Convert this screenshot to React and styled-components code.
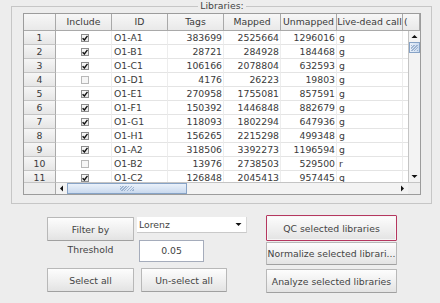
import React from "react";
import styled, { createGlobalStyle } from "styled-components";

const GlobalStyle = createGlobalStyle`
  html, body {
    margin: 0;
    padding: 0;
    background: #ededed;
  }
  body {
    width: 440px;
    height: 303px;
    overflow: hidden;
    font-family: "DejaVu Sans", "Noto Sans", sans-serif;
    color: #444;
  }
`;

const COLS = [56, 56, 56, 57, 56, 66];
const HEADERS = ["Include", "ID", "Tags", "Mapped", "Unmapped", "Live-dead call"];

const ROWS = [
  [true, "O1-A1", 383699, 2525664, 1296016, "g"],
  [true, "O1-B1", 28721, 284928, 184468, "g"],
  [true, "O1-C1", 106166, 2078804, 632593, "g"],
  [false, "O1-D1", 4176, 26223, 19803, "g"],
  [true, "O1-E1", 270958, 1755081, 857591, "g"],
  [true, "O1-F1", 150392, 1446848, 882679, "g"],
  [true, "O1-G1", 118093, 1802294, 647936, "g"],
  [true, "O1-H1", 156265, 2215298, 499348, "g"],
  [true, "O1-A2", 318506, 3392273, 1196594, "g"],
  [false, "O1-B2", 13976, 2738503, 529500, "r"],
  [true, "O1-C2", 126848, 2045413, 957445, "g"],
];

const Page = styled.div`
  width: 440px;
`;

const GroupBox = styled.fieldset`
  box-sizing: border-box;
  width: 421px;
  margin: 0 0 0 11px;
  padding: 1px 10px 8px 11px;
  border: 1px solid #c6c6c6;
  min-inline-size: 0;
`;

const GroupTitle = styled.legend`
  margin: 0 auto;
  padding: 0 2px;
  font-size: 9.3px;
  line-height: 12px;
  color: #444;
`;

const TableFrame = styled.div`
  display: grid;
  grid-template-columns: 32px 352px 12px;
  grid-template-rows: 17px 151px 12px;
  border: 1px solid #9c9c9c;
  background: #ffffff;
  font-size: 9.3px;
  color: #3a3a3a;
`;

const Corner = styled.div`
  background: linear-gradient(#f7f7f7, #e9e9e9);
  border-right: 1px solid #a9a9a9;
  border-bottom: 1px solid #a9a9a9;
`;

const HeaderStrip = styled.div`
  grid-column: 2 / 4;
  display: flex;
  overflow: hidden;
  background: linear-gradient(#f7f7f7, #e9e9e9);
  border-bottom: 1px solid #a9a9a9;
`;

const HeaderCell = styled.div`
  box-sizing: border-box;
  flex: ${(p) => (p.$w ? `0 0 ${p.$w}px` : "1 1 auto")};
  border-right: 1px solid #a9a9a9;
  line-height: 16px;
  text-align: ${(p) => (p.$w ? "center" : "left")};
  padding-left: ${(p) => (p.$w ? 0 : 1)}px;
  white-space: nowrap;
  overflow: hidden;
`;

const RowHeads = styled.div`
  overflow: hidden;
  background: #ececec;
`;

const RowHead = styled.div`
  box-sizing: border-box;
  height: 14px;
  line-height: 13px;
  text-align: center;
  border-right: 1px solid #a9a9a9;
  border-bottom: 1px solid #c4c4c4;
  background: linear-gradient(#f6f6f6, #e6e6e6);
`;

const Viewport = styled.div`
  overflow: hidden;
`;

const Row = styled.div`
  display: grid;
  grid-template-columns: ${COLS.map((c) => `${c}px`).join(" ")} 60px;
  height: 14px;
  width: 407px;
`;

const Cell = styled.div`
  box-sizing: border-box;
  border-right: 1px solid #ededed;
  border-bottom: 1px solid #e4e4e4;
  line-height: 13px;
  white-space: nowrap;
  overflow: hidden;
  text-align: ${(p) => p.$align || "left"};
  padding: 0 ${(p) => (p.$align === "right" ? 1 : 0)}px 0
    ${(p) => (p.$align === "left" || !p.$align ? 2 : 0)}px;
  display: ${(p) => (p.$check ? "flex" : "block")};
  align-items: center;
  justify-content: center;
`;

const Box = styled.span`
  box-sizing: border-box;
  width: 8px;
  height: 8px;
  border: 1px solid ${(p) => (p.$on ? "#8c8c8c" : "#b8b8b8")};
  background: ${(p) => (p.$on ? "linear-gradient(#fafafa, #e6e6e6)" : "#f6f6f6")};
  display: flex;
  align-items: center;
  justify-content: center;
`;

const VScroll = styled.div`
  display: flex;
  flex-direction: column;
  background: #f3f3f3;
  border-left: 1px solid #c4c4c4;
`;

const HScroll = styled.div`
  grid-column: 2 / 3;
  display: flex;
  background: #f3f3f3;
  border-top: 1px solid #c4c4c4;
`;

const BlankCell = styled.div`
  background: #ededed;
  border-top: 1px solid #c4c4c4;
  border-right: ${(p) => (p.$right ? "1px solid #a9a9a9" : "none")};
`;

const Arrow = styled.div`
  flex: 0 0 11px;
  display: flex;
  align-items: center;
  justify-content: center;
`;

const Thumb = styled.div`
  box-sizing: border-box;
  flex: 0 0 ${(p) => p.$len}px;
  border: 1px solid #87a3c6;
  background: linear-gradient(
    ${(p) => (p.$vertical ? "90deg" : "180deg")},
    #eaf1fa,
    #c9d9ee
  );
  display: flex;
  align-items: center;
  justify-content: center;
`;

const Grip = styled.span`
  width: ${(p) => (p.$vertical ? 7 : 14)}px;
  height: ${(p) => (p.$vertical ? 6 : 5)}px;
  background: repeating-linear-gradient(
    135deg,
    #8fa8c8 0 1px,
    transparent 1px 2px
  );
  opacity: 0.8;
`;

const Trough = styled.div`
  flex: 1 1 auto;
`;

const Controls = styled.div`
  display: flex;
  align-items: flex-start;
  padding-left: 47px;
  gap: 19px;
`;

const LeftGrid = styled.div`
  display: grid;
  grid-template-columns: 87px 110px;
  grid-template-rows: 24px 27px 24px;
  column-gap: 3px;
  margin-top: 13px;
`;

const Button = styled.button`
  box-sizing: border-box;
  margin: ${(p) => p.$m || "0"};
  width: ${(p) => p.$w || 87}px;
  height: ${(p) => p.$h || 24}px;
  padding: 0;
  font-family: "DejaVu Sans", sans-serif;
  font-size: 9.3px;
  color: #444;
  white-space: nowrap;
  overflow: hidden;
  border: 1px solid ${(p) => (p.$focus ? "#b5375f" : "#b8b8b8")};
  border-bottom-color: ${(p) => (p.$focus ? "#b5375f" : "#a0a0a0")};
  border-radius: 1px;
  background: linear-gradient(#fdfdfd, #eeeeee 60%, #e3e3e3);
  box-shadow: ${(p) => (p.$focus ? "inset 0 0 0 1px #f6f6f6" : "none")};
`;

const Combo = styled.div`
  box-sizing: border-box;
  width: 110px;
  height: 16px;
  display: flex;
  align-items: center;
  justify-content: space-between;
  padding: 0 4px 0 2px;
  background: #fff;
  border-bottom: 1px solid #c9c9c9;
  border-right: 1px solid #d8d8d8;
  font-size: 9.3px;
`;

const Label = styled.div`
  font-size: 9.3px;
  line-height: 17px;
  text-align: center;
`;

const Field = styled.div`
  box-sizing: border-box;
  width: 65px;
  height: 22px;
  margin: -1px 0 0 2px;
  background: #fff;
  border: 1px solid #a5acbb;
  font-size: 9.3px;
  line-height: 20px;
  text-align: center;
`;

const RightCol = styled.div`
  display: flex;
  flex-direction: column;
  margin-top: 11px;
`;

function Tri({ dir }) {
  const pts = {
    up: "0,4 3,1 6,4",
    down: "0,1 6,1 3,4",
    left: "4,0 4,6 1,3",
    right: "1,0 1,6 4,3",
  }[dir];
  const vert = dir === "up" || dir === "down";
  return (
    <svg width={vert ? 7 : 5} height={vert ? 5 : 7} viewBox={vert ? "0 0 6 5" : "0 0 5 6"}>
      <polygon points={pts} fill="#111" />
    </svg>
  );
}

function Check({ on }) {
  return (
    <Box $on={on}>
      {on && (
        <svg width="6" height="6" viewBox="0 0 6 6">
          <path d="M0.6 3.2 L2.4 5 L5.5 0.8" stroke="#111" strokeWidth="1.4" fill="none" />
        </svg>
      )}
    </Box>
  );
}

export default function App() {
  return (
    <Page>
      <GlobalStyle />
      <GroupBox>
        <GroupTitle>Libraries:</GroupTitle>
        <TableFrame>
          <Corner />
          <HeaderStrip>
            {HEADERS.map((h, i) => (
              <HeaderCell key={h} $w={COLS[i]}>
                {h}
              </HeaderCell>
            ))}
            <HeaderCell>(</HeaderCell>
          </HeaderStrip>

          <RowHeads>
            {ROWS.map((_, i) => (
              <RowHead key={i}>{i + 1}</RowHead>
            ))}
          </RowHeads>
          <Viewport>
            {ROWS.map((r) => (
              <Row key={r[1]}>
                <Cell $check>
                  <Check on={r[0]} />
                </Cell>
                <Cell>{r[1]}</Cell>
                <Cell $align="right">{r[2]}</Cell>
                <Cell $align="right">{r[3]}</Cell>
                <Cell $align="right">{r[4]}</Cell>
                <Cell>{r[5]}</Cell>
                <Cell />
              </Row>
            ))}
          </Viewport>
          <VScroll>
            <Arrow>
              <Tri dir="up" />
            </Arrow>
            <Thumb $len={11} $vertical>
              <Grip $vertical />
            </Thumb>
            <Trough />
            <Arrow>
              <Tri dir="down" />
            </Arrow>
          </VScroll>

          <BlankCell $right />
          <HScroll>
            <Arrow>
              <Tri dir="left" />
            </Arrow>
            <Thumb $len={120}>
              <Grip />
            </Thumb>
            <Trough />
            <Arrow>
              <Tri dir="right" />
            </Arrow>
          </HScroll>
          <BlankCell />
        </TableFrame>
      </GroupBox>

      <Controls>
        <LeftGrid>
          <Button>Filter by</Button>
          <Combo>
            <span>Lorenz</span>
            <Tri dir="down" />
          </Combo>
          <Label>Threshold</Label>
          <Field>0.05</Field>
          <Button>Select all</Button>
          <Button $w={86} $m="0 0 0 4px">
            Un-select all
          </Button>
        </LeftGrid>
        <RightCol>
          <Button $w={131} $h={26} $focus>
            QC selected libraries
          </Button>
          <Button $w={131} $h={23} $m="1px 0 0 0">
            Normalize selected librari...
          </Button>
          <Button $w={131} $h={24} $m="4px 0 0 0">
            Analyze selected libraries
          </Button>
        </RightCol>
      </Controls>
    </Page>
  );
}
